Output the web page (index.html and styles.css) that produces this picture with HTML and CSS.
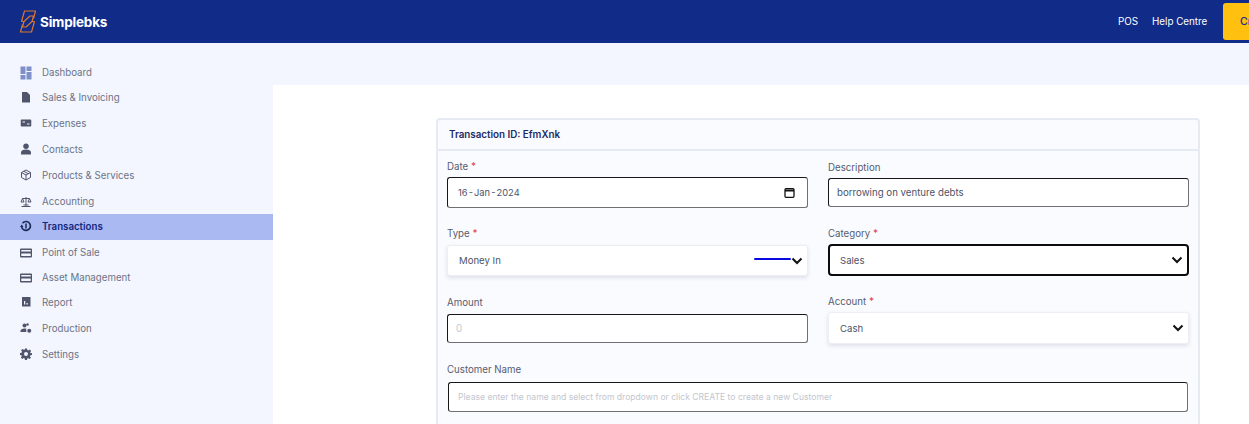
FILE: index.html
```html
<!DOCTYPE html>
<html lang="en">
<head>
<meta charset="utf-8">
<title>Simplebks</title>
<link rel="stylesheet" href="styles.css">
</head>
<body>
<header class="topbar">
  <div class="brand">
    <svg class="logo" width="18" height="23" viewBox="0 0 18 23" fill="none" stroke="#d9782c" stroke-width="1.200" stroke-linejoin="round"><path d="M2.500 11.500L5.500 1H16.500L14.500 8.500"/><path d="M15.500 11.500L12.500 22H1.500L3.500 14.500"/><path d="M2.500 11.500H5L11 6H14.500L13 11.500H15.500"/><path d="M13 11.500L7 17H3.500L5 11.500"/></svg>
    <span class="brand-name">Simplebks</span>
  </div>
  <nav class="top-links"><a>POS</a><a>Help Centre</a></nav>
  <button class="cta">Create New</button>
</header>
<div class="shell">
  <aside class="sidebar">
    <a class="item short"><svg class="ico dash" viewBox="0 0 24 28"><path fill="#7f8fc9" d="M1 1h10v15H1zM13 1h10v9H13zM13 12h10v15H13zM1 18h10v9H1z"/></svg>Dashboard</a>
    <a class="item"><svg class="ico" viewBox="0 0 24 24"><path d="M4 2h10l6 6v15H4z"/></svg>Sales &amp; Invoicing</a>
    <a class="item"><svg class="ico" viewBox="0 0 24 24"><path fill-rule="evenodd" d="M3 5h18a1.500 1.500 0 0 1 1.500 1.500v11A1.500 1.500 0 0 1 21 19H3a1.500 1.500 0 0 1-1.500-1.500v-11A1.500 1.500 0 0 1 3 5zM5 9v2h5V9zM14 13v2h5v-2z"/></svg>Expenses</a>
    <a class="item"><svg class="ico" viewBox="0 0 24 24"><circle cx="12" cy="6.500" r="5.500"/><path d="M2 23v-4c0-4 4-6 10-6s10 2 10 6v4z"/></svg>Contacts</a>
    <a class="item"><svg class="ico line" viewBox="0 0 24 24"><path d="M12 2l9 5v10l-9 5-9-5V7zM3 7l9 5 9-5M12 12v10M7.500 4.500l9 5"/></svg>Products &amp; Services</a>
    <a class="item short"><svg class="ico line" viewBox="0 0 24 24"><path d="M12 2v17M5 5h14M3 21h18M5 5l-3 7h6zM19 5l-3 7h6zM7 18h10"/></svg>Accounting</a>
    <a class="item active"><svg class="ico" viewBox="0 0 24 24"><path fill-rule="evenodd" d="M12 1.500a10.500 10.500 0 1 1-10.300 12.500L0 14l3.500-5 3.500 5H4.900A7.300 7.300 0 1 0 6 7.500L3.800 5.400A10.500 10.500 0 0 1 12 1.500zM10.500 7h3v10h-3z"/></svg>Transactions</a>
    <a class="item short"><svg class="ico" viewBox="0 0 24 24"><path fill-rule="evenodd" d="M2 3h20a2 2 0 0 1 2 2v14a2 2 0 0 1-2 2H2a2 2 0 0 1-2-2V5a2 2 0 0 1 2-2zM2.500 6v3h19V6zM2.500 13v5h19v-5z"/></svg>Point of Sale</a>
    <a class="item short"><svg class="ico" viewBox="0 0 24 24"><path fill-rule="evenodd" d="M2 3h20a2 2 0 0 1 2 2v14a2 2 0 0 1-2 2H2a2 2 0 0 1-2-2V5a2 2 0 0 1 2-2zM2.500 6v3h19V6zM2.500 13v5h19v-5z"/></svg>Asset Management</a>
    <a class="item"><svg class="ico" viewBox="0 0 24 24"><path fill-rule="evenodd" d="M4 2h17v19H4zM8 10v7h2.500v-7zM13 14v3h2.500v-3z"/></svg>Report</a>
    <a class="item"><svg class="ico" viewBox="0 0 24 24"><circle cx="9" cy="7" r="4"/><path d="M1 20v-2c0-3 3-5 8-5 1.500 0 2.500.2 3.500.5V20z"/><circle cx="18.500" cy="17.500" r="4"/><circle cx="15" cy="5" r="2.500"/></svg>Production</a>
    <a class="item"><svg class="ico" viewBox="0 0 24 24"><path fill-rule="evenodd" d="M10 1h4l.7 3.200 1.900.8 2.800-1.800 2.800 2.800-1.800 2.800.8 1.900L24 10v4l-3.200.7-.8 1.900 1.800 2.800-2.800 2.800-2.800-1.800-1.900.8L14 24h-4l-.7-3.200-1.900-.8-2.800 1.800-2.800-2.800 1.800-2.800-.8-1.900L0 14v-4l3.200-.7.800-1.900-1.800-2.800 2.800-2.800 2.800 1.800 1.900-.8zM12 8a4 4 0 1 0 0 8 4 4 0 0 0 0-8z"/></svg>Settings</a>
  </aside>
  <main class="content">
    <section class="card">
      <h2 class="card-head">Transaction ID: EfmXnk</h2>
      <form class="form">
        <div class="field">
          <label class="label">Date <b>*</b></label>
          <div class="control date">
            <input class="bare" type="text" value="16 - Jan - 2024">
            <svg width="11" height="11" viewBox="0 0 11 11" fill="none" stroke="#111" stroke-width="1.300"><rect x="1" y="1.700" width="9" height="8.600" rx="1"/><path d="M1 3.500h9" stroke-width="2"/></svg>
          </div>
        </div>
        <div class="field low">
          <label class="label">Description</label>
          <input class="control text" type="text" value="borrowing on venture debts">
        </div>
        <div class="field">
          <label class="label">Type <b>*</b></label>
          <div class="pick-wrap gap4">
            <select class="pick soft"><option>Money In</option></select>
            <span class="blue-line"></span>
          </div>
        </div>
        <div class="field">
          <label class="label">Category <b>*</b></label>
          <select class="pick focus"><option>Sales</option></select>
        </div>
        <div class="field low">
          <label class="label">Amount</label>
          <input class="control text amount" type="text" placeholder="0">
        </div>
        <div class="field">
          <label class="label">Account <b>*</b></label>
          <select class="pick soft tall"><option>Cash</option></select>
        </div>
        <div class="field wide">
          <label class="label">Customer Name</label>
          <input class="control text customer" type="text" placeholder="Please enter the name and select from dropdown or click CREATE to create a new Customer">
        </div>
      </form>
    </section>
  </main>
</div>
</body>
</html>
```
FILE: styles.css
```css
* { box-sizing: border-box; }
html, body { margin: 0; height: 424px; overflow: hidden; }
body { font-family: Inter, "Noto Sans", sans-serif; font-size: 10px; color: #4d5468; background: #f3f6fe; }

.topbar { display: flex; align-items: center; height: 43px; background: #112b88; overflow: hidden; }
.brand { flex: 0 0 1118px; display: flex; align-items: center; gap: 3px; padding-left: 19px; }
.logo { display: block; }
.brand-name { color: #fff; font-size: 13.500px; font-weight: 700; letter-spacing: -0.2px; }
.top-links { flex: 0 0 105px; display: flex; gap: 14px; color: #fff; font-size: 9.800px; }
.cta { flex: 0 0 120px; height: 37px; padding: 0 0 0 17px; border: 0; border-radius: 3px; background: #ffc010; color: #1b2a8a; font: 500 10.500px Inter, sans-serif; text-align: left; }

.shell { display: flex; height: 381px; }
.sidebar { flex: 0 0 273px; padding-top: 17px; }
.item { display: flex; align-items: center; gap: 10px; height: 26px; padding: 0 0 2px 20px; color: #6d7386; font-size: 9.700px; white-space: nowrap; }
.item.short { height: 25px; padding-bottom: 0; }
.item.active { background: #aab9f2; color: #12277e; font-weight: 600; }
.ico { flex: none; width: 12px; height: 12px; fill: #50556b; }
.ico.dash { height: 14px; }
.item.active .ico { fill: #1c2a57; }
.ico.line { fill: none; stroke: #50556b; stroke-width: 2; }

.content { flex: 1; margin-top: 42px; padding: 33px 49px 0 163px; background: #fff; }
.card { border: 2px solid #e6eaf3; border-radius: 4px; background: #fafbfe; padding-bottom: 40px; }
.card-head { margin: 0; height: 31px; padding: 0 11px; border-bottom: 2px solid #e6eaf3; font-size: 9.800px; font-weight: 600; line-height: 29px; color: #1c2a66; }
.form { display: grid; grid-template-columns: 361px 361px; column-gap: 20px; row-gap: 17px; padding: 7px 0 0 9px; }
.field { display: flex; flex-direction: column; align-items: stretch; }
.field.low { padding-top: 1px; }
.field.wide { grid-column: 1 / -1; padding-right: 1px; padding-left: 1px; }
.label { height: 16px; margin-bottom: 3px; font-size: 9.700px; line-height: 18px; color: #565c70; }
.label b { color: #e53950; font-weight: 500; }
.field.wide .label { margin-bottom: 5px; margin-left: -1px; }

.control { border: 1px solid #17171a; border-right-color: #6f6f74; border-bottom-color: #6f6f74; border-radius: 3px; background: #fff; font: 9.700px Inter, sans-serif; color: #4d5468; }
.date { display: flex; align-items: center; height: 31px; padding: 0 12px 0 10px; font-size: 9.300px; }
.bare { flex: 1; min-width: 0; border: 0; padding: 0; background: none; font: inherit; word-spacing: -1.500px; color: inherit; outline: none; }
.text { height: 29px; padding: 0 8px; outline: none; }
.amount { margin-top: 1px; }
.customer { height: 30px; padding: 0 9px; font-size: 8.600px; }
::placeholder { color: #c3c6cf; opacity: 1; }

.pick { appearance: none; width: 100%; height: 31px; padding: 0 10px 0 11px; border: 1px solid #eceef4; border-radius: 3px; background: #fff url("data:image/svg+xml,%3Csvg xmlns='http://www.w3.org/2000/svg' width='12' height='8' viewBox='0 0 12 8'%3E%3Cpath d='M1.500 1.500L6 6l4.500-4.500' fill='none' stroke='%23111' stroke-width='2'/%3E%3C/svg%3E") no-repeat right 4px center; font: 9.600px Inter, sans-serif; color: #4d5468; }
.soft { box-shadow: 0 2px 4px rgba(60, 70, 110, .14); }
.focus { height: 32px; padding-left: 10px; border: 2px solid #0c0c0e; border-radius: 4px; }
.tall { height: 32px; }
.pick-wrap { position: relative; }
.gap4 { margin-top: 1px; }
.blue-line { position: absolute; left: 307px; top: 13px; width: 37px; height: 2px; background: #0a0ae0; border-radius: 1px; }
```
